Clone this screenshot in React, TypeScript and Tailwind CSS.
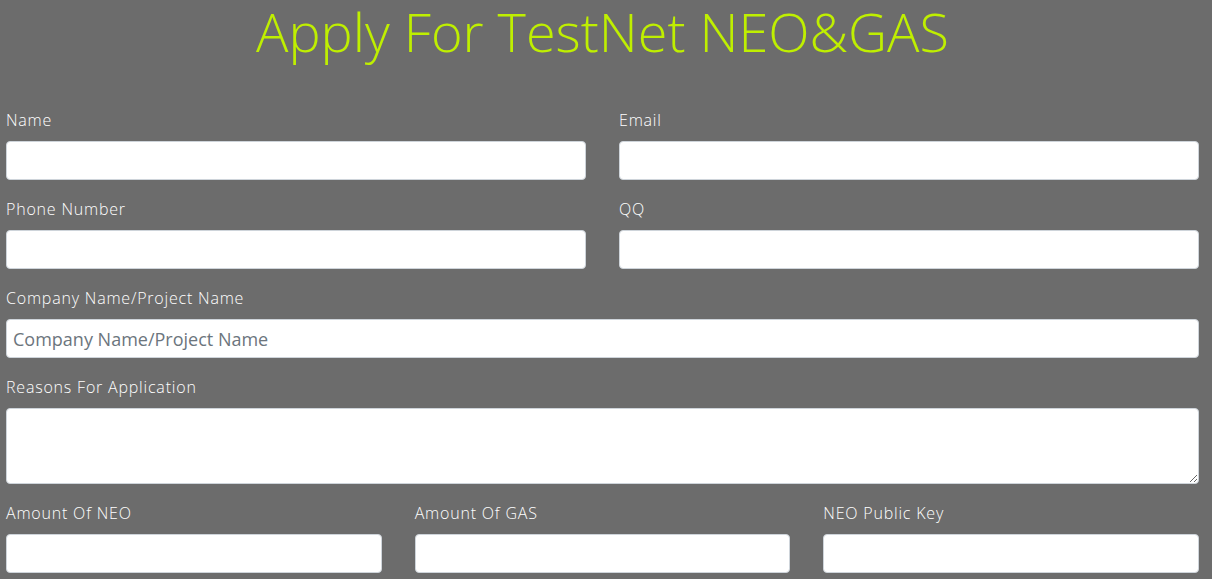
import { useId } from "react";

const controlClass =
  "block w-full rounded border border-[#ced4da] bg-white px-1.5 text-lg text-[#495057] placeholder:text-[#6c757d] placeholder:opacity-100 focus:border-[#80bdff] focus:outline-none";

type FieldProps = {
  label: string;
  type?: string;
  placeholder?: string;
  multiline?: boolean;
};

function Field({ label, type = "text", placeholder, multiline = false }: FieldProps) {
  const id = useId();
  return (
    <div className="flex min-w-0 flex-1 flex-col gap-[9px]">
      <label htmlFor={id} className="text-base leading-6 font-light tracking-wider text-white">
        {label}
      </label>
      {multiline ? (
        <textarea id={id} className={`${controlClass} h-[76px] resize-y`} />
      ) : (
        <input id={id} type={type} placeholder={placeholder} className={`${controlClass} h-[39px]`} />
      )}
    </div>
  );
}

export default function App() {
  return (
    <main className="min-h-screen bg-[#6c6c6c] pr-[13px] pb-1.5 pl-1.5 font-['Open_Sans','Noto_Sans',sans-serif]">
      <h1 className="text-center text-[54px] leading-[62px] font-light text-[#bfef00]">
        Apply For TestNet NEO&amp;GAS
      </h1>
      <form className="mt-[46px] flex flex-col gap-[17px]">
        <div className="flex gap-[33px]">
          <Field label="Name" />
          <Field label="Email" type="email" />
        </div>
        <div className="flex gap-[33px]">
          <Field label="Phone Number" type="tel" />
          <Field label="QQ" />
        </div>
        <Field label="Company Name/Project Name" placeholder="Company Name/Project Name" />
        <Field label="Reasons For Application" multiline />
        <div className="flex gap-[33px]">
          <Field label="Amount Of NEO" />
          <Field label="Amount Of GAS" />
          <Field label="NEO Public Key" />
        </div>
      </form>
    </main>
  );
}
